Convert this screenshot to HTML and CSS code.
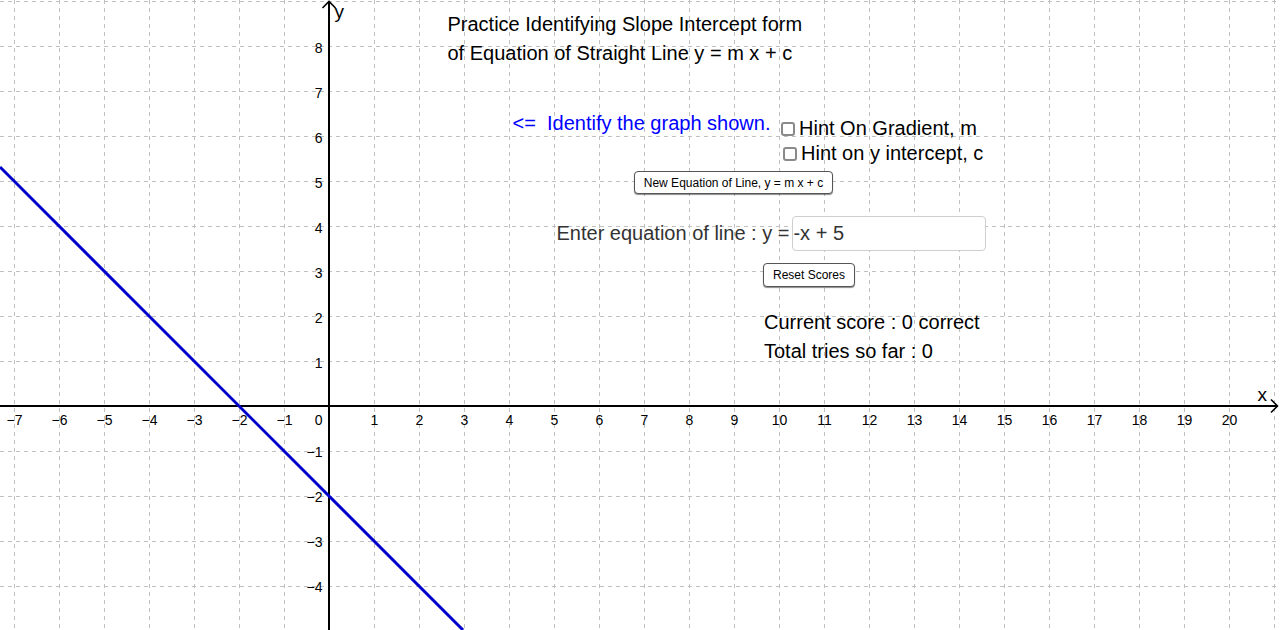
FILE: index.html
```html
<!DOCTYPE html>
<html lang="en">
<head>
<meta charset="utf-8">
<title>Slope Intercept Practice</title>
<link rel="stylesheet" href="styles.css">
</head>
<body>
<div class="applet">
  <svg class="graph" width="1280" height="630" viewBox="0 0 1280 630" xmlns="http://www.w3.org/2000/svg">
    <path class="grid" d="M14.5 0V630M59.5 0V630M104.5 0V630M149.5 0V630M194.5 0V630M239.5 0V630M284.5 0V630M374.5 0V630M419.5 0V630M464.5 0V630M509.5 0V630M554.5 0V630M599.5 0V630M644.5 0V630M689.5 0V630M734.5 0V630M779.5 0V630M824.5 0V630M869.5 0V630M914.5 0V630M959.5 0V630M1004.5 0V630M1049.5 0V630M1094.5 0V630M1139.5 0V630M1184.5 0V630M1229.5 0V630M1274.5 0V630"/>
    <path class="grid" d="M0 1.5H1280M0 46.5H1280M0 91.5H1280M0 136.5H1280M0 181.5H1280M0 226.5H1280M0 271.5H1280M0 316.5H1280M0 361.5H1280M0 451.5H1280M0 496.5H1280M0 541.5H1280M0 586.5H1280"/>
    <path class="axis" d="M329 2V630M0 406H1277"/>
    <path class="arrow" d="M322.5 8L329 1.5L335.5 8M1271 399.5L1277.5 406L1271 412.5"/>
    <text class="axis-name" x="334.5" y="18">y</text>
    <text class="axis-name" x="1257.5" y="401">x</text>
    <g class="xlabels">
      <text x="14.5" y="425">−7</text>
      <text x="59.5" y="425">−6</text>
      <text x="104.5" y="425">−5</text>
      <text x="149.5" y="425">−4</text>
      <text x="194.5" y="425">−3</text>
      <text x="239.5" y="425">−2</text>
      <text x="284.5" y="425">−1</text>
      <text x="374.5" y="425">1</text>
      <text x="419.5" y="425">2</text>
      <text x="464.5" y="425">3</text>
      <text x="509.5" y="425">4</text>
      <text x="554.5" y="425">5</text>
      <text x="599.5" y="425">6</text>
      <text x="644.5" y="425">7</text>
      <text x="689.5" y="425">8</text>
      <text x="734.5" y="425">9</text>
      <text x="779.5" y="425">10</text>
      <text x="824.5" y="425">11</text>
      <text x="869.5" y="425">12</text>
      <text x="914.5" y="425">13</text>
      <text x="959.5" y="425">14</text>
      <text x="1004.5" y="425">15</text>
      <text x="1049.5" y="425">16</text>
      <text x="1094.5" y="425">17</text>
      <text x="1139.5" y="425">18</text>
      <text x="1184.5" y="425">19</text>
      <text x="1229.5" y="425">20</text>
    </g>
    <g class="ylabels">
      <text x="322.5" y="425">0</text>
      <text x="322.5" y="53">8</text>
      <text x="322.5" y="98">7</text>
      <text x="322.5" y="143">6</text>
      <text x="322.5" y="188">5</text>
      <text x="322.5" y="233">4</text>
      <text x="322.5" y="278">3</text>
      <text x="322.5" y="323">2</text>
      <text x="322.5" y="368">1</text>
      <text x="322.5" y="457">−1</text>
      <text x="322.5" y="502">−2</text>
      <text x="322.5" y="547">−3</text>
      <text x="322.5" y="592">−4</text>
    </g>
    <path class="line" d="M0 167L463 630"/>
  </svg>

  <div class="title">Practice Identifying Slope Intercept form<br>of Equation of Straight Line y = m x + c</div>
  <div class="prompt">&lt;=&nbsp; Identify the graph shown.</div>

  <label class="hint hint-m"><span class="box"></span><span class="hint-text">Hint On Gradient, m</span></label>
  <label class="hint hint-c"><span class="box"></span><span class="hint-text">Hint on y intercept, c</span></label>

  <button class="btn btn-new" type="button">New Equation of Line, y = m x + c</button>

  <div class="entry">
    <span class="entry-label">Enter equation of line : y =</span>
    <input class="entry-input" type="text" value="-x + 5">
  </div>

  <button class="btn btn-reset" type="button">Reset Scores</button>

  <div class="scores">
    <div>Current score : 0 correct</div>
    <div>Total tries so far : 0</div>
  </div>
</div>
</body>
</html>
```

FILE: styles.css
```css
html, body {
  margin: 0;
  padding: 0;
  background: #ffffff;
}

body {
  font-family: "Liberation Sans", Arial, sans-serif;
  color: #000;
  overflow: hidden;
}

.applet {
  position: relative;
  width: 1280px;
  height: 630px;
  overflow: hidden;
  background: #fff;
}

.graph {
  display: block;
}

.grid {
  fill: none;
  stroke: #c0c0c0;
  stroke-width: 1;
  stroke-dasharray: 4 4;
}

.axis {
  fill: none;
  stroke: #000;
  stroke-width: 2;
}

.arrow {
  fill: none;
  stroke: #000;
  stroke-width: 1.6;
  stroke-linejoin: miter;
}

.axis-name {
  font-family: "Liberation Sans", Arial, sans-serif;
  font-size: 19px;
  fill: #000;
}

.xlabels text {
  font-family: "Liberation Sans", Arial, sans-serif;
  font-size: 14px;
  fill: #000;
  text-anchor: middle;
}

.ylabels text {
  font-family: "Liberation Sans", Arial, sans-serif;
  font-size: 14px;
  fill: #000;
  text-anchor: end;
}

.line {
  fill: none;
  stroke: #0000cc;
  stroke-width: 3;
}

/* widgets placed on the applet canvas */
.title {
  position: absolute;
  left: 447.5px;
  top: 10px;
  font-size: 20px;
  line-height: 29px;
  white-space: nowrap;
}

.prompt {
  position: absolute;
  left: 512.5px;
  top: 112px;
  font-size: 20px;
  line-height: 23px;
  color: #0000ff;
  white-space: nowrap;
}

.hint {
  position: absolute;
  display: flex;
  align-items: center;
  gap: 4px;
  font-size: 20px;
  line-height: 23px;
  white-space: nowrap;
}

.hint-m {
  left: 781px;
  top: 117px;
}

.hint-c {
  left: 783px;
  top: 142px;
}

.box {
  display: block;
  flex: 0 0 auto;
  width: 14px;
  height: 14px;
  box-sizing: border-box;
  border: 2px solid #8a8a8a;
  border-radius: 3px;
  background: #fff;
  margin-top: 1px;
}

.btn {
  position: absolute;
  box-sizing: border-box;
  margin: 0;
  padding: 0;
  background: #fff;
  border: 1px solid #555;
  border-radius: 4px;
  box-shadow: 0 1px 1px rgba(0, 0, 0, 0.45);
  font-family: "Liberation Sans", Arial, sans-serif;
  font-size: 12px;
  color: #000;
  text-align: center;
}

.btn-new {
  left: 634px;
  top: 171px;
  width: 199px;
  height: 23px;
}

.btn-reset {
  left: 763px;
  top: 263px;
  width: 92px;
  height: 24px;
}

.entry {
  position: absolute;
  left: 556.5px;
  top: 216px;
  display: flex;
  align-items: center;
  gap: 3px;
}

.entry-label {
  font-size: 20px;
  line-height: 23px;
  color: #333;
  white-space: nowrap;
}

.entry-input {
  box-sizing: border-box;
  width: 194px;
  height: 35px;
  margin: 0;
  padding: 0;
  border: 1px solid #cfcfcf;
  border-radius: 4px;
  font-family: "Liberation Sans", Arial, sans-serif;
  font-size: 20px;
  color: #333;
  background: #fff;
  outline: none;
}

.scores {
  position: absolute;
  left: 764px;
  top: 308px;
  font-size: 20px;
  line-height: 29px;
  white-space: nowrap;
}
```
